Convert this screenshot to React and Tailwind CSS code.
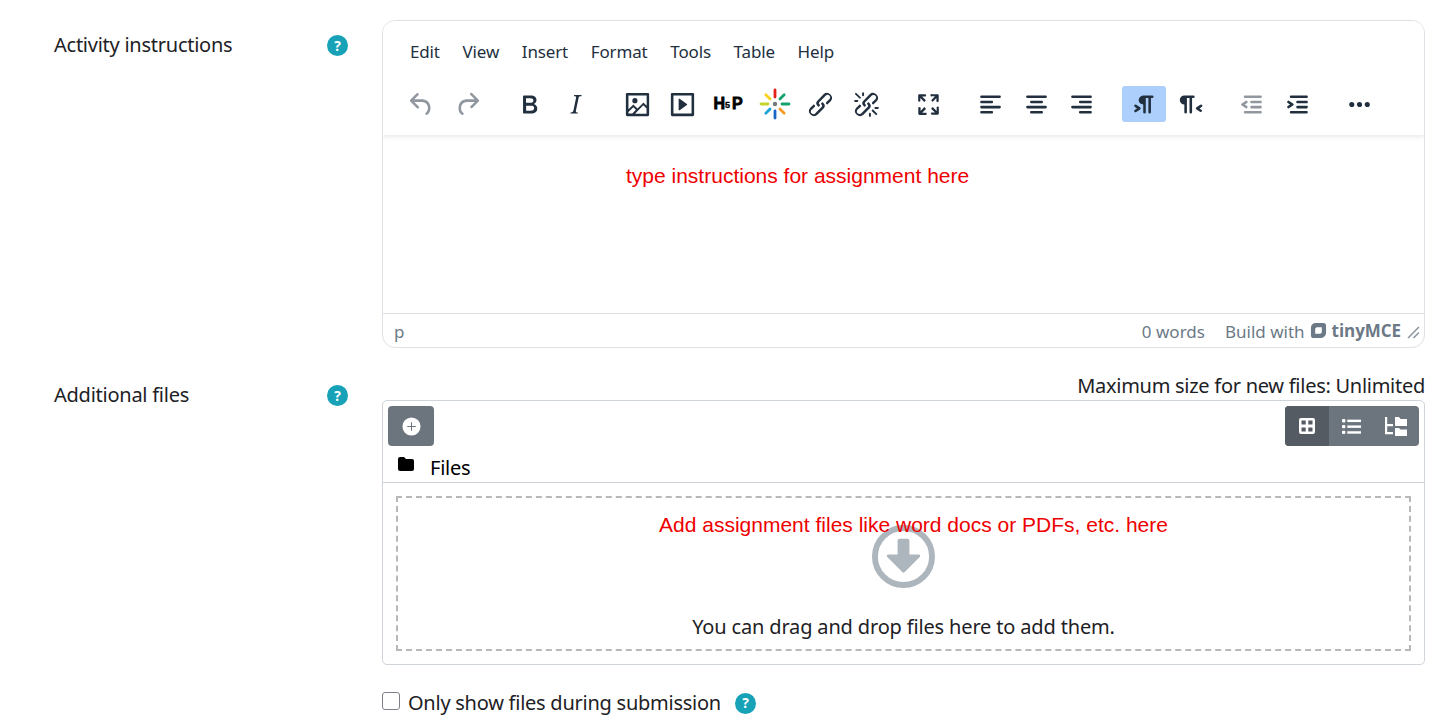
const NAVY = "#222f3e";
const I = {
  undo: "M6.4 8H12c3.7 0 6.2 2 6.8 5.1.6 2.7-.4 5.6-2.3 6.8a1 1 0 0 1-1-1.8c1.1-.6 1.8-2.7 1.4-4.6-.5-2.1-2.1-3.5-4.9-3.5H6.4l3.3 3.3a1 1 0 1 1-1.4 1.4l-5-5a1 1 0 0 1 0-1.4l5-5a1 1 0 0 1 1.4 1.4L6.4 8Z",
  redo: "M17.6 10H12c-2.8 0-4.4 1.4-4.9 3.5-.4 2 .3 4 1.4 4.6a1 1 0 1 1-1 1.8c-2-1.2-2.9-4.1-2.3-6.8.6-3 3-5.1 6.8-5.1h5.6l-3.3-3.3a1 1 0 1 1 1.4-1.4l5 5a1 1 0 0 1 0 1.4l-5 5a1 1 0 0 1-1.4-1.4l3.3-3.3Z",
  bold: "M7.8 19c-.3 0-.5 0-.6-.2l-.2-.5V5.7c0-.2 0-.4.2-.5l.6-.2h5c1.5 0 2.7.3 3.5 1 .7.6 1.1 1.4 1.1 2.5a3 3 0 0 1-.6 1.9c-.4.6-1 1-1.6 1.2.4.1.9.3 1.3.6s.8.7 1 1.2c.4.4.5 1 .5 1.6 0 1.3-.4 2.3-1.3 3-.8.7-2.1 1-3.8 1H7.8Zm5-8.3c.6 0 1.2-.1 1.6-.5.4-.3.6-.7.6-1.3 0-1.1-.8-1.7-2.3-1.7H9.3v3.5h3.4Zm.5 6c.7 0 1.3-.1 1.7-.4.4-.4.6-.9.6-1.5s-.2-1-.7-1.4c-.4-.3-1-.4-2-.4H9.4v3.8h4Z",
  italic: "M16.7 4.7l-.1.9h-.3c-.6 0-1 0-1.4.3-.3.3-.4.6-.5 1.1l-2.1 9.8v.6c0 .5.4.8 1.4.8h.2l-.2.8H8l.2-.8h.2c1.1 0 1.8-.5 2-1.5l2-9.8.1-.5c0-.6-.4-.8-1.4-.8h-.3l.2-.9h5.8Z",
  image: "m5 15.7 3.3-3.2c.3-.3.7-.3 1 0L12 15l4.1-4c.3-.4.8-.4 1 0l2 1.9V5H5v10.7ZM5 18V19h3l2.8-2.9-2-2L5 17.9Zm14-3-2.5-2.4-6.4 6.5H19v-4ZM4 3h16c.6 0 1 .4 1 1v16c0 .6-.4 1-1 1H4a1 1 0 0 1-1-1V4c0-.6.4-1 1-1Zm6 8a2 2 0 1 0 0-4 2 2 0 0 0 0 4Z",
  media: "M4 3h16c.6 0 1 .4 1 1v16c0 .6-.4 1-1 1H4a1 1 0 0 1-1-1V4c0-.6.4-1 1-1Zm1 2v14h14V5H5Zm4.8 2.6 5.6 4a.5.5 0 0 1 0 .8l-5.6 4A.5.5 0 0 1 9 16V8a.5.5 0 0 1 .8-.4Z",
  link: "M6.2 12.3a1 1 0 0 1 1.4 1.4l-2 2a2 2 0 1 0 2.6 2.8l4.8-4.8a1 1 0 0 0 0-1.4 1 1 0 1 1 1.4-1.3 2.9 2.9 0 0 1 0 4L9.6 20a3.9 3.9 0 0 1-5.5-5.5l2-2Zm11.6-.6a1 1 0 0 1-1.4-1.4l2-2a2 2 0 1 0-2.6-2.8L11 10.3a1 1 0 0 0 0 1.4A1 1 0 1 1 9.6 13a2.9 2.9 0 0 1 0-4L14.4 4a3.9 3.9 0 0 1 5.5 5.5l-2 2Z",
  unlink: "M6.2 12.3a1 1 0 0 1 1.4 1.4l-2.1 2a2 2 0 1 0 2.7 2.8l4.8-4.8a1 1 0 0 0 0-1.4 1 1 0 1 1 1.4-1.3 2.9 2.9 0 0 1 0 4L9.6 20a3.9 3.9 0 0 1-5.5-5.5l2-2Zm11.6-.6a1 1 0 0 1-1.4-1.4l2.1-2a2 2 0 1 0-2.7-2.8L11 10.3a1 1 0 0 0 0 1.4A1 1 0 1 1 9.6 13a2.9 2.9 0 0 1 0-4L14.4 4a3.9 3.9 0 0 1 5.5 5.5l-2 2ZM7.6 6.3a.8.8 0 0 1-1 1.1L3.3 4.2a.7.7 0 1 1 1-1l3.2 3.1ZM5.1 8.6a.8.8 0 0 1 0 1.5H3a.8.8 0 0 1 0-1.5H5Zm5-3.5a.8.8 0 0 1-1.5 0V3a.8.8 0 0 1 1.5 0v2Zm6 11.8a.8.8 0 0 1 1-1l3.2 3.2a.8.8 0 0 1-1 1L16 17Zm-2.2 2a.8.8 0 0 1 1.5 0V21a.8.8 0 0 1-1.5 0V19Zm5-3.5a.7.7 0 1 1 0-1.5H21a.8.8 0 0 1 0 1.5H19Z",
  full: "m15.3 10-1.2-1.3 2.9-3h-2.3a.9.9 0 1 1 0-1.7H19c.5 0 .9.4.9.9v4.4a.9.9 0 1 1-1.8 0V7l-2.9 3Zm0 4 3 3v-2.3a.9.9 0 1 1 1.7 0V19c0 .5-.4.9-.9.9h-4.4a.9.9 0 1 1 0-1.8H17l-3-2.9 1.3-1.2ZM10 15.4l-2.9 3h2.3a.9.9 0 1 1 0 1.7H5a.9.9 0 0 1-.9-.9v-4.4a.9.9 0 1 1 1.8 0V17l2.9-3 1.2 1.3ZM8.7 10 5.7 7v2.3a.9.9 0 0 1-1.7 0V5c0-.5.4-.9.9-.9h4.4a.9.9 0 0 1 0 1.8H7l3 2.9-1.3 1.2Z",
  left: "M5 5h14c.6 0 1 .4 1 1s-.4 1-1 1H5a1 1 0 1 1 0-2Zm0 4h8c.6 0 1 .4 1 1s-.4 1-1 1H5a1 1 0 1 1 0-2Zm0 8h8c.6 0 1 .4 1 1s-.4 1-1 1H5a1 1 0 0 1 0-2Zm0-4h14c.6 0 1 .4 1 1s-.4 1-1 1H5a1 1 0 0 1 0-2Z",
  center: "M5 5h14c.6 0 1 .4 1 1s-.4 1-1 1H5a1 1 0 1 1 0-2Zm3 4h8c.6 0 1 .4 1 1s-.4 1-1 1H8a1 1 0 1 1 0-2Zm0 8h8c.6 0 1 .4 1 1s-.4 1-1 1H8a1 1 0 0 1 0-2Zm-3-4h14c.6 0 1 .4 1 1s-.4 1-1 1H5a1 1 0 0 1 0-2Z",
  right: "M5 5h14c.6 0 1 .4 1 1s-.4 1-1 1H5a1 1 0 1 1 0-2Zm6 4h8c.6 0 1 .4 1 1s-.4 1-1 1h-8a1 1 0 0 1 0-2Zm0 8h8c.6 0 1 .4 1 1s-.4 1-1 1h-8a1 1 0 0 1 0-2Zm-6-4h14c.6 0 1 .4 1 1s-.4 1-1 1H5a1 1 0 0 1 0-2Z",
  ltr: "M11 5h7a1 1 0 0 1 0 2h-1v11a1 1 0 0 1-2 0V7h-2v11a1 1 0 0 1-2 0v-6c-.5 0-1 0-1.4-.3A3.4 3.4 0 0 1 7.8 10a3.3 3.3 0 0 1 0-2.8 3.4 3.4 0 0 1 1.8-1.8L11 5ZM4.4 16.2 6.2 15l-1.8-1.2a1 1 0 0 1 1.2-1.6l3 2a1 1 0 0 1 0 1.6l-3 2a1 1 0 1 1-1.2-1.6Z",
  rtl: "M8 5h7a1 1 0 0 1 0 2h-1v11a1 1 0 0 1-2 0V7h-2v11a1 1 0 0 1-2 0v-6a3.5 3.5 0 0 1 0-7Zm13.6 11.4L19.8 15l1.8-1.2a1 1 0 0 0-1.2-1.6l-3 2a1 1 0 0 0 0 1.6l3 2a1 1 0 0 0 1.2-1.4Z",
  outdent: "M7 5h12c.6 0 1 .4 1 1s-.4 1-1 1H7a1 1 0 1 1 0-2Zm5 4h7c.6 0 1 .4 1 1s-.4 1-1 1h-7a1 1 0 0 1 0-2Zm0 4h7c.6 0 1 .4 1 1s-.4 1-1 1h-7a1 1 0 0 1 0-2Zm-5 4h12a1 1 0 0 1 0 2H7a1 1 0 0 1 0-2Zm1.6-3.8a1 1 0 0 1-1.2 1.6l-3-2a1 1 0 0 1 0-1.6l3-2a1 1 0 0 1 1.2 1.6L6.8 12l1.8 1.2Z",
  indent: "M7 5h12c.6 0 1 .4 1 1s-.4 1-1 1H7a1 1 0 1 1 0-2Zm5 4h7c.6 0 1 .4 1 1s-.4 1-1 1h-7a1 1 0 0 1 0-2Zm0 4h7c.6 0 1 .4 1 1s-.4 1-1 1h-7a1 1 0 0 1 0-2Zm-5 4h12a1 1 0 0 1 0 2H7a1 1 0 0 1 0-2Zm-2.6-3.8L6.2 12l-1.8-1.2a1 1 0 0 1 1.2-1.6l3 2a1 1 0 0 1 0 1.6l-3 2a1 1 0 1 1-1.2-1.6Z",
  more: "M6 10a2 2 0 0 0-2 2c0 1.1.9 2 2 2a2 2 0 0 0 2-2 2 2 0 0 0-2-2Zm12 0a2 2 0 0 0-2 2c0 1.1.9 2 2 2a2 2 0 0 0 2-2 2 2 0 0 0-2-2Zm-6 0a2 2 0 0 0-2 2c0 1.1.9 2 2 2a2 2 0 0 0 2-2 2 2 0 0 0-2-2Z",
};

function Tool({ name, disabled, active, group }) {
  return (
    <div className={`flex items-center justify-center h-[36px] rounded-[3px] ${active ? "w-[44px] mx-[0.9px] bg-[#acd0fb]" : "w-[45.8px]"} ${group ? "mr-[16.3px]" : ""}`}>
      <svg viewBox="0 0 24 24" className="w-[31px] h-[31px]" fill={NAVY} fillOpacity={disabled ? 0.5 : 1}>
        <path d={I[name]} />
      </svg>
    </div>
  );
}

function H5P() {
  return (
    <div className="flex items-center justify-center w-[45.8px] h-[36px]">
      <svg viewBox="0 0 32 16" className="w-[32px] h-[16px]">
        <text x="0.5" y="13" fontFamily="'Liberation Sans', sans-serif" fontWeight="700" fontSize="16" stroke="#000" strokeWidth="0.8">H</text>
        <text x="12" y="12" fontFamily="'Liberation Sans', sans-serif" fontWeight="700" fontSize="9" stroke="#000" strokeWidth="0.3">5</text>
        <text x="19" y="13" fontFamily="'Liberation Sans', sans-serif" fontWeight="700" fontSize="16" stroke="#000" strokeWidth="0.8">P</text>
      </svg>
    </div>
  );
}

function Spark() {
  const spokes = [
    [0, "#e2231a"], [45, "#13a36f"], [90, "#13a36f"], [135, "#f49b23"], [180, "#1a66c9"],
    [225, "#19a4d8"], [270, "#c6d42b"], [315, "#f7d21c"],
  ];
  return (
    <div className="flex items-center justify-center w-[45.8px] h-[36px]">
      <svg viewBox="0 0 32 32" className="w-[32px] h-[32px]">
        {spokes.map(([a, c]) => (
          <line key={a} x1="16" y1="9" x2="16" y2={a % 90 === 0 ? 2 : 3} stroke={c} strokeWidth="2.8" strokeLinecap="round" transform={`rotate(${a} 16 16)`} />
        ))}
        <circle cx="16" cy="16" r="2.2" fill="#777" />
      </svg>
    </div>
  );
}

function Help() {
  return (
    <span className="flex items-center justify-center w-[21px] h-[21px] rounded-full bg-[#17a2b8] text-white text-[14px] font-bold leading-none font-['Open_Sans',sans-serif]">?</span>
  );
}

function Label({ text }) {
  return (
    <div className="w-[382px] shrink-0 flex items-start pl-[54px] pt-[10px]">
      <div className="w-[273px] text-[20px] leading-[30px] tracking-[-0.25px] text-[#1d2125]">{text}</div>
      <div className="pt-[5px]"><Help /></div>
    </div>
  );
}

function Editor() {
  return (
    <div className="h-[328px] w-[1043px] border border-[#dee2e6] rounded-[13px] flex flex-col overflow-hidden bg-white">
      <div className="h-[114px] shrink-0 shadow-[0_2px_4px_rgba(34,47,62,0.1)] relative z-10 bg-white">
        <div className="flex pl-[27px] pt-[16px] h-[54px] text-[17px] leading-[30px] tracking-[-0.15px] text-[#222f3e] gap-x-[22.7px]">
          {["Edit", "View", "Insert", "Format", "Tools", "Table", "Help"].map((m) => <span key={m}>{m}</span>)}
        </div>
        <div className="flex items-center pl-[15.5px] pt-[11px]">
          <Tool name="undo" disabled /><Tool name="redo" disabled group />
          <Tool name="bold" /><Tool name="italic" group />
          <Tool name="image" /><Tool name="media" /><H5P /><Spark /><Tool name="link" /><Tool name="unlink" group />
          <Tool name="full" group />
          <Tool name="left" /><Tool name="center" /><Tool name="right" group />
          <Tool name="ltr" active /><Tool name="rtl" group />
          <Tool name="outdent" disabled /><Tool name="indent" group />
          <Tool name="more" />
        </div>
      </div>
      <div className="flex-1 pl-[243px] pt-[28px] text-[21px] leading-[25px] text-[#ee0000] font-['Liberation_Sans',sans-serif]">
        type instructions for assignment here
      </div>
      <div className="h-[34px] shrink-0 border-t border-[#dee2e6] flex items-center pl-[11px] pr-[4px] pt-[3px] text-[#6c7986] text-[17px]">
        <span className="flex-1">p</span>
        <span className="mr-[20px]">0 words</span>
        <span className="mr-[5px]">Build with</span>
        <svg viewBox="0 0 18 18" className="w-[17px] h-[17px] mr-[5px] mb-[3px]"><path fillRule="evenodd" fill="#6c7986" d="M6 1h8a3 3 0 0 1 3 3v7a6 6 0 0 1-6 6H4a3 3 0 0 1-3-3V6a5 5 0 0 1 5-5Zm1 4.5L5.5 7v5.5H11l1.500-1.500V5.500H7Z" /></svg>
        <span className="font-['Open_Sans',sans-serif] font-bold text-[17px] tracking-[-0.05px] leading-none mr-[6px] mb-[3px]">tinyMCE</span>
        <svg viewBox="0 0 12 12" className="w-[13px] h-[13px]"><path d="M1 11 11 1M6 11l5-5" stroke="#8a949e" strokeWidth="1.4" fill="none" /></svg>
      </div>
    </div>
  );
}

function Picker() {
  return (
    <div className="w-[1043px] h-[265px] border border-[#ced4da] rounded-[5px] flex flex-col bg-white">
      <div className="flex justify-between px-[5px] pt-[5px]">
        <div className="w-[46px] h-[40px] rounded-[4px] bg-[#6c757d] flex items-center justify-center">
          <svg viewBox="0 0 20 20" className="w-[19px] h-[19px]"><circle cx="10" cy="10" r="9.5" fill="#fff" /><path d="M10 5.5v9M5.5 10h9" stroke="#6c757d" strokeWidth="1.1" /></svg>
        </div>
        <div className="flex h-[40px] w-[134px] rounded-[4px] overflow-hidden bg-[#6c757d]">
          <div className="w-[44px] bg-[#545b62] flex items-center justify-center">
            <svg viewBox="0 0 18 18" className="w-[18px] h-[18px]"><path fillRule="evenodd" fill="#fff" d="M3 1h12a2 2 0 0 1 2 2v12a2 2 0 0 1-2 2H3a2 2 0 0 1-2-2V3a2 2 0 0 1 2-2Zm.5 2.5v4h4.2v-4H3.500Zm6.800 0v4h4.200v-4h-4.200Zm-6.800 7v4h4.200v-4H3.500Zm6.800 0v4h4.200v-4h-4.200Z" /></svg>
          </div>
          <div className="w-[44px] flex items-center justify-center">
            <svg viewBox="0 0 18 18" className="w-[19px] h-[19px]" fill="#fff"><rect x="0" y="2" width="3.200" height="3.200" rx="1" /><rect x="5" y="2.500" width="13" height="2.300" /><rect x="0" y="7.500" width="3.200" height="3.200" rx="1" /><rect x="5" y="8" width="13" height="2.300" /><rect x="0" y="13" width="3.200" height="3.200" rx="1" /><rect x="5" y="13.500" width="13" height="2.300" /></svg>
          </div>
          <div className="w-[46px] flex items-center justify-center">
            <svg viewBox="0 0 22 19" className="w-[22px] h-[19px]" fill="#fff"><path d="M0 0h2.200v7H8v2.200H2.200V15H8v2.200H0V0Z" /><path d="M10 0h4l1.500 2H22v7H10V0ZM10 11h4l1.500 1.500H22V19H10v-8Z" /></svg>
          </div>
        </div>
      </div>
      <div className="flex items-center h-[37px] border-b border-[#ced4da] pl-[15px] pt-[7px] text-black text-[20px] tracking-[-0.25px]">
        <svg viewBox="0 0 16 14" className="w-[16px] h-[14px] mr-[16px] mb-[7px]"><path d="M2 0h4l2 2h6a2 2 0 0 1 2 2v8a2 2 0 0 1-2 2H2a2 2 0 0 1-2-2V2a2 2 0 0 1 2-2Z" /></svg>
        Files
      </div>
      <div className="flex-1 p-[13px]">
        <div className="relative h-full border-2 border-dashed border-[#b8b8b8] flex flex-col items-center text-[20px] tracking-[-0.16px] text-[#1d2125]">
          <svg viewBox="0 0 64 64" className="w-[63px] h-[63px] mt-[27px]">
            <circle cx="32" cy="32" r="29" fill="none" stroke="#adb5bd" strokeWidth="6" />
            <path fill="#adb5bd" d="M28 14h8a2 2 0 0 1 2 2v14h9.500a1.500 1.500 0 0 1 1 2.600L33.500 47.600a2 2 0 0 1-3 0L15.500 32.600a1.500 1.500 0 0 1 1-2.600H26V16a2 2 0 0 1 2-2Z" />
          </svg>
          <div className="mt-[24px] leading-[30px]">You can drag and drop files here to add them.</div>
          <div className="absolute top-[14px] left-0 right-0 pl-[20px] text-center text-[21px] leading-[25px] tracking-normal text-[#ee0000] font-['Liberation_Sans',sans-serif]">
            Add assignment files like word docs or PDFs, etc. here
          </div>
        </div>
      </div>
    </div>
  );
}

export default function App() {
  return (
    <div className="w-[1430px] h-[727px] overflow-hidden bg-white pt-[20px] font-['Noto_Sans',sans-serif]">
      <div className="flex">
        <Label text="Activity instructions" />
        <Editor />
      </div>
      <div className="flex mt-[23px]">
        <div className="-mt-px"><Label text="Additional files" /></div>
        <div className="w-[1043px]">
          <div className="text-right text-[20px] leading-[29px] tracking-[-0.27px] text-[#1d2125]">Maximum size for new files: Unlimited</div>
          <Picker />
          <div className="flex items-center mt-[23px] text-[20px] leading-[30px] tracking-[-0.25px] text-[#1d2125]">
            <span className="w-[18px] h-[18px] rounded-[3px] border border-[#7f7f8c] mr-[8px] mb-[5px] bg-white" />
            <span className="mr-[14px]">Only show files during submission</span>
            <Help />
          </div>
        </div>
      </div>
    </div>
  );
}
